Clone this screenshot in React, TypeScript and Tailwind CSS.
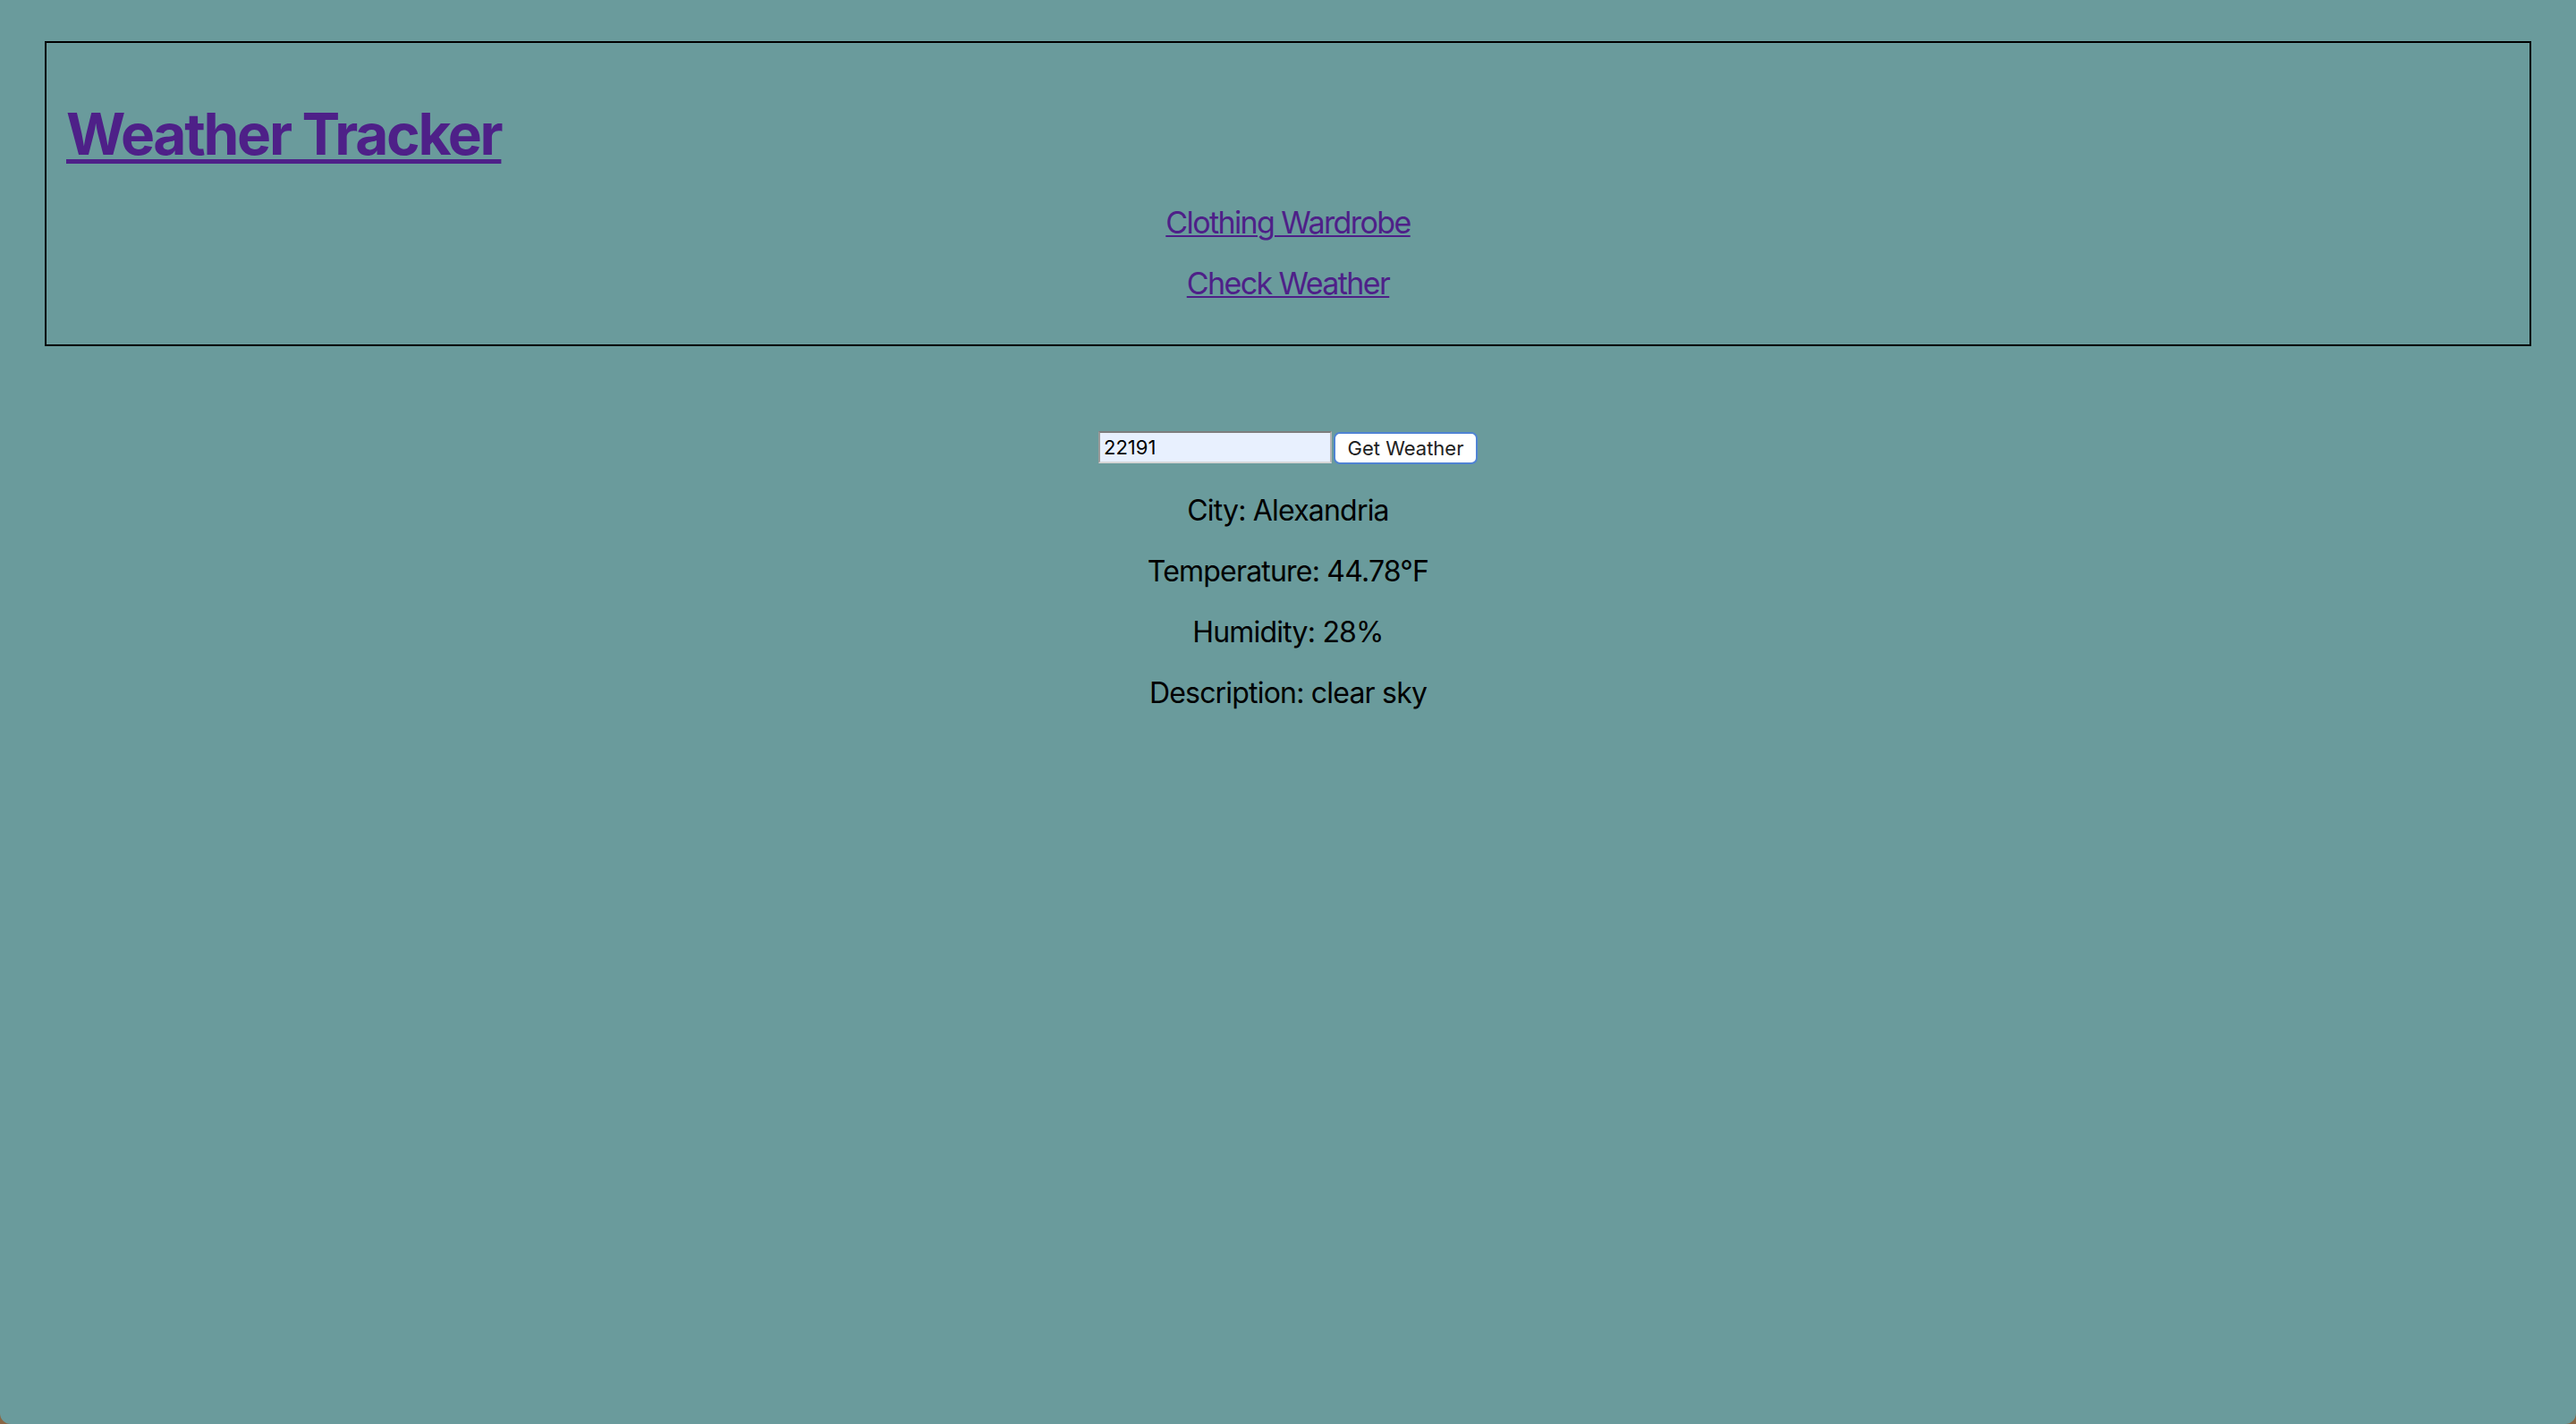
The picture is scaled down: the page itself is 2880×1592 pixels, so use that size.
import React from "react";

const lines = [
  "City: Alexandria",
  "Temperature: 44.78°F",
  "Humidity: 28%",
  "Description: clear sky",
];

export default function App() {
  return (
    <div className="h-[1592px] bg-[#8a6644]">
      <div className="flex h-[1592px] flex-col rounded-b-[12px] bg-[#6a9b9c] pt-[46px] font-['Inter','Noto_Sans',sans-serif] text-black">
        <header className="mx-[50px] flex h-[341px] flex-col border-2 border-black">
          <h1 className="mt-[70px] pl-[22px] text-[64px] font-bold leading-none tracking-[-2.3px] text-[#4e2088]">
            <a href="#" className="underline decoration-[5px] underline-offset-[5px]">Weather Tracker</a>
          </h1>
          <nav className="mt-[50px] flex flex-col items-center gap-[34px] text-[34px] leading-none tracking-[-1.6px] text-[#4e2088]">
            <a href="#" className="underline decoration-2 underline-offset-[2px]">Clothing Wardrobe</a>
            <a href="#" className="underline decoration-2 underline-offset-[2px]">Check Weather</a>
          </nav>
        </header>

        <main className="mt-[95px] flex flex-col items-center">
          <div className="flex items-start gap-[2px]">
            <input
              defaultValue="22191"
              className="h-[36px] w-[261px] border-2 border-t-[#7d7d7d] border-l-[#9a9a9a] border-r-[#b5b5b5] border-b-[#d6d6d6] bg-[#e8f0fe] px-[4px] text-[22px] text-black outline-none"
            />
            <button className="mt-[1px] h-[36px] w-[161px] rounded-[7px] border-2 border-[#4f83d3] bg-white text-[22px] text-[#222]">
              Get Weather
            </button>
          </div>
          <div className="mt-[36px] flex flex-col items-center gap-[36px] text-[32px] leading-none tracking-[-0.8px]">
            {lines.map((l) => (
              <p key={l}>{l}</p>
            ))}
          </div>
        </main>
      </div>
    </div>
  );
}
